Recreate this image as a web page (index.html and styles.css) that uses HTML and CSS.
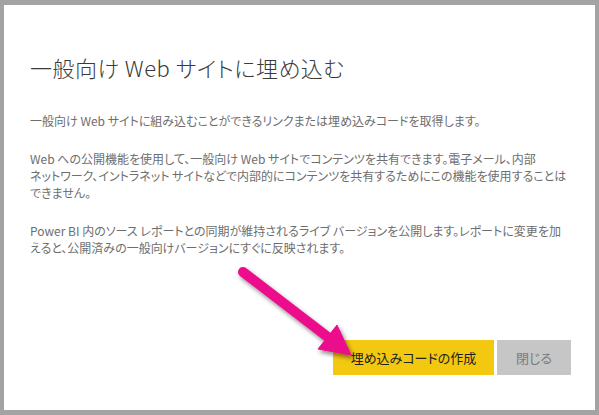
FILE: index.html
```html
<!DOCTYPE html>
<html lang="ja">
<head>
<meta charset="utf-8">
<link rel="stylesheet" href="styles.css">
</head>
<body>
<div class="frame">
  <div class="dialog">
    <h1 class="title">一般向け Web サイトに埋め込む</h1>
    <p class="para">一般向け Web サイトに組み込むことができるリンクまたは埋め込みコードを取得します。</p>
    <p class="para">Web への公開機能を使用して、一般向け Web サイトでコンテンツを共有できます。電子メール、内部<br>ネットワーク、イントラネット サイトなどで内部的にコンテンツを共有するためにこの機能を使用することは<br>できません。</p>
    <p class="para">Power BI 内のソース レポートとの同期が維持されるライブ バージョンを公開します。レポートに変更を加<br>えると、公開済みの一般向けバージョンにすぐに反映されます。</p>
    <div class="actions">
      <button class="btn btn-primary">埋め込みコードの作成</button>
      <button class="btn btn-secondary">閉じる</button>
    </div>
  </div>
  <svg class="arrow" width="599" height="415" viewBox="0 0 599 415">
    <defs>
      <filter id="sh" x="-20%" y="-20%" width="140%" height="140%">
        <feDropShadow dx="2" dy="3" stdDeviation="2" flood-color="#000" flood-opacity="0.45"/>
      </filter>
    </defs>
    <g filter="url(#sh)" fill="#ec0c8c" stroke="#ec0c8c">
      <line x1="243" y1="272" x2="329" y2="338" stroke-width="10" stroke-linecap="round"/>
      <polygon points="337,325 318,349 351,355" stroke-width="1" stroke-linejoin="round"/>
    </g>
  </svg>
</div>
</body>
</html>
```
FILE: styles.css
```css
html, body {
  margin: 0;
  padding: 0;
}
body {
  width: 599px;
  height: 415px;
  background: #a3a3a3;
  font-family: "Noto Sans CJK JP", "Noto Sans", sans-serif;
  font-feature-settings: "palt";
}
.frame {
  position: relative;
  width: 599px;
  height: 415px;
  padding: 5px 4px 5px 4px;
  box-sizing: border-box;
}
.dialog {
  background: #fff;
  height: 100%;
  box-sizing: border-box;
  padding: 48px 24px 35px 26px;
  display: flex;
  flex-direction: column;
}
.title {
  margin: 0 0 31px 0;
  font-size: 22px;
  line-height: 28px;
  font-weight: 300;
  color: #3a3a3a;
  letter-spacing: 0.5px;
}
.para {
  margin: 0 0 21px 0;
  font-size: 12px;
  line-height: 17px;
  color: #6e6e6e;
}
.actions {
  margin-top: auto;
  display: flex;
  justify-content: flex-end;
  gap: 3px;
}
.btn {
  border: 0;
  height: 35px;
  font-family: inherit;
  font-feature-settings: "palt";
  font-size: 13px;
  padding: 0;
}
.btn-primary {
  width: 161px;
  background: #f2c811;
  color: #222;
}
.btn-secondary {
  width: 74px;
  background: #c6c6c6;
  color: #7a7a7a;
}
.arrow {
  position: absolute;
  left: 0;
  top: 0;
  pointer-events: none;
}
```
